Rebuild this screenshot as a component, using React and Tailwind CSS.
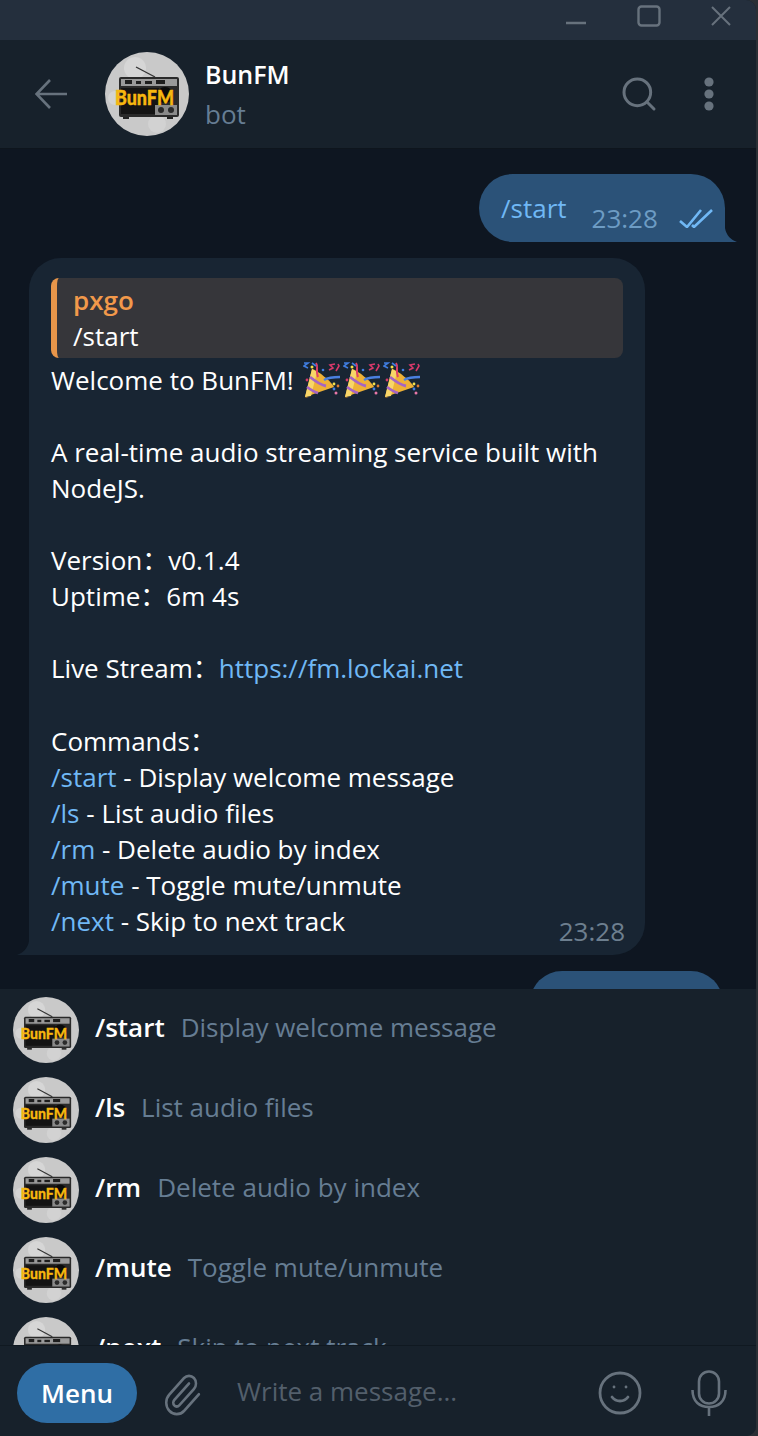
import { Search, Smile } from 'lucide-react';

const font = { fontFamily: '"Open Sans", "Noto Sans CJK SC", sans-serif' };

// round bot logo: grey disc with a little black radio and yellow label
const BotAvatar = ({ size }) => (
  <svg width={size} height={size} viewBox="0 0 84 84" className="shrink-0 block">
    <circle cx="42" cy="42" r="42" fill="#c9c9c9" />
    <circle cx="30" cy="16" r="11" fill="#d6d6d6" />
    <circle cx="52" cy="72" r="9" fill="#d2d2d2" />
    <circle cx="10" cy="46" r="7" fill="#d4d4d4" />
    <path d="M31 15 L50 25" stroke="#333" strokeWidth="1.4" />
    <rect x="14" y="25" width="60" height="40" rx="2" fill="#2a2a2a" />
    <rect x="16" y="27" width="56" height="7" fill="#9a9a9a" />
    <rect x="20" y="28" width="7" height="4" fill="#1e1e1e" />
    <rect x="31" y="29" width="5" height="3" fill="#1e1e1e" />
    <rect x="40" y="29" width="7" height="3" fill="#1e1e1e" />
    <rect x="51" y="28" width="9" height="4" fill="#1e1e1e" />
    <rect x="16" y="36" width="38" height="26" fill="#141414" />
    <circle cx="60" cy="43" r="8" fill="#0a0a0a" />
    <rect x="50" y="53" width="22" height="10" fill="#8a8a8a" />
    <circle cx="56" cy="58" r="3" fill="#2a2a2a" />
    <circle cx="66" cy="58" r="3" fill="#2a2a2a" />
    <rect x="18" y="65" width="6" height="2" fill="#222" />
    <rect x="62" y="65" width="6" height="2" fill="#222" />
    <text x="10" y="53" textLength="59" lengthAdjust="spacingAndGlyphs" fontFamily="Lato, sans-serif" fontWeight="900" fontSize="20" fill="#f6b70f" stroke="#f6b70f" strokeWidth="0.4">BunFM</text>
  </svg>
);

const PartyPopper = () => (
  <svg width="40" height="36" viewBox="0 0 40 36" className="shrink-0">
    <path d="M2 35 L9 7 C14 8 28 19 31 25 Z" fill="#eeb136" />
    <path d="M2 35 L9 7 L14 10 L8 34 Z" fill="#f8d668" />
    <path d="M7 15 C12 19 17 23 23 24 M4 25 C8 28 11 30 15 31" fill="none" stroke="#a464c4" strokeWidth="2.8" />
    <path d="M2 35 L3 36 L6 35 Z" fill="#8a5a20" />
    <path d="M13 1 C16 5 12 8 15 15" fill="none" stroke="#e0406a" strokeWidth="2" />
    <path d="M1 1 L5 1 L1 4 L5 6 M9 1 L13 4" fill="none" stroke="#3f7de0" strokeWidth="1.6" />
    <path d="M26 8 L30 6 L27 3 L32 2 M33 9 L36 4 L35 2" fill="none" stroke="#d83a6a" strokeWidth="1.6" />
    <path d="M21 18 C26 15 31 15 37 15" fill="none" stroke="#4a80e0" strokeWidth="2.4" />
    <circle cx="9" cy="5" r="1.5" fill="#f4e24a" />
    <circle cx="4" cy="18" r="1.4" fill="#d83a6a" />
    <circle cx="31" cy="22" r="1.4" fill="#f4e24a" />
    <circle cx="35" cy="24" r="1.4" fill="#e08030" />
    <circle cx="31" cy="27" r="1.4" fill="#3f7de0" />
    <circle cx="33" cy="31" r="1.5" fill="#e878a8" />
    <circle cx="20" cy="8" r="1.3" fill="#3f7de0" />
  </svg>
);

const Cmd = ({ name, desc }) => (
  <div>
    <span className="text-[#70b8f5]">{name}</span> - {desc}
  </div>
);

const commands = [
  ['/start', 'Display welcome message'],
  ['/ls', 'List audio files'],
  ['/rm', 'Delete audio by index'],
  ['/mute', 'Toggle mute/unmute'],
  ['/next', 'Skip to next track'],
];

const App = () => {
  return (
    <div className="w-[758px] h-[1436px] bg-[#2a2f35]">
      <div style={font} className="w-[756px] h-full flex flex-col overflow-hidden rounded-r-[10px] bg-[#17212b] text-white">
        {/* title bar */}
        <div className="h-10 shrink-0 bg-[#242f3d] flex items-start text-[#67727d]">
          <svg width="756" height="40" viewBox="0 0 756 40" fill="none" stroke="currentColor" strokeWidth="2.4" className="shrink-0">
            <path d="M566 23 H586" />
            <rect x="638.5" y="6.5" width="21" height="19" rx="3" />
            <path d="M712 7 L730 25 M730 7 L712 25" strokeWidth="2" />
          </svg>
        </div>

        {/* chat header */}
        <div className="h-[109px] shrink-0 bg-[#17212b] border-b border-[#0e151d] flex items-center pl-[35px] pr-[42px]">
          <svg width="32" height="30" viewBox="0 0 32 30" fill="none" stroke="#67727d" strokeWidth="2.6" className="shrink-0">
            <path d="M32 15 H2 M15 1 L1.5 15 L15 29" />
          </svg>
          <div className="ml-[38px]">
            <BotAvatar size={84} />
          </div>
          <div className="ml-4 flex-1">
            <div className="text-[25px] leading-[36px] font-semibold text-white">BunFM</div>
            <div className="text-[26px] leading-[36px] mt-[4px] text-[#667d93]">bot</div>
          </div>
          <Search size={40} strokeWidth={1.8} className="text-[#67727d] mr-[45px]" />
          <svg width="10" height="34" viewBox="0 0 10 34" className="text-[#67727d]" fill="currentColor">
            <circle cx="5" cy="5" r="4.6" />
            <circle cx="5" cy="17" r="4.6" />
            <circle cx="5" cy="29" r="4.6" />
          </svg>
        </div>

        {/* messages */}
        <div className="h-[840px] shrink-0 bg-[#0e1621] overflow-hidden flex flex-col pt-[25px] text-[26px] leading-[36px]">
          <div className="self-end shrink-0 mr-[31px] relative w-[246px] h-[68px] rounded-[34px] rounded-br-none bg-[#2b5278] flex pl-[22px] pt-[16px]">
            <span className="text-[#70b8f5]">/start</span>
            <span className="ml-[25px] mt-[10px] text-[#6d9cc4]">23:28</span>
            <svg width="34" height="19" viewBox="0 0 34 19" className="ml-[21px] mt-[19px] text-[#70b8f5]" fill="none" stroke="currentColor" strokeWidth="2.6">
              <path d="M1 12 L8 18 L22 1 M13 16 L15 18 L33 1" />
            </svg>
            <svg width="12" height="14" viewBox="0 0 12 14" className="absolute -right-[12px] bottom-0" fill="#2b5278">
              <path d="M0 0 C1 7 6 12 12 14 L0 14 Z" />
            </svg>
          </div>

          <div className="ml-[29px] mt-4 shrink-0 relative w-[616px] h-[697px] rounded-[32px] rounded-bl-none bg-[#182533] pl-[22px] pr-[22px] pt-[20px]">
            <div className="h-[80px] rounded-[8px] bg-[#36363a] border-l-[6px] border-[#e8964a] pl-[16px] pt-1">
              <div className="font-semibold text-[#f2994a]">pxgo</div>
              <div>/start</div>
            </div>
            <div className="flex items-center h-9 mt-1">
              <span>Welcome to BunFM!</span>
              <span className="flex ml-[9px]">
                <PartyPopper />
                <PartyPopper />
                <PartyPopper />
              </span>
            </div>
            <div className="mt-9">A real-time audio streaming service built with</div>
            <div>NodeJS.</div>
            <div className="mt-9">Version：v0.1.4</div>
            <div>Uptime：6m 4s</div>
            <div className="mt-9">
              Live Stream：<span className="text-[#70b8f5]">https://fm.lockai.net</span>
            </div>
            <div className="mt-[37px]">Commands：</div>
            {commands.map(([name, desc]) => (
              <Cmd key={name} name={name} desc={desc} />
            ))}
            <span className="absolute right-[20px] bottom-[6px] text-[#6d7f8f]">23:28</span>
            <svg width="12" height="14" viewBox="0 0 12 14" className="absolute -left-[12px] bottom-0" fill="#182533">
              <path d="M12 0 C11 7 6 12 0 14 L12 14 Z" />
            </svg>
          </div>

          <div className="self-end shrink-0 mr-[33px] mt-4 w-[193px] h-[40px] rounded-t-[32px] bg-[#2b5278]" />
        </div>

        {/* bot command suggestions */}
        <div className="h-[357px] shrink-0 overflow-hidden bg-[#17212b] border-b border-[#101921] pt-[8px] pl-[13px]">
          {commands.map(([name, desc]) => (
            <div key={name} className="h-20 flex items-start">
              <BotAvatar size={66} />
              <div className="ml-[16px] mt-[12px] text-[26px] leading-[36px] flex">
                <span className="font-semibold text-white">{name}</span>
                <span className="ml-4 text-[#667d93]">{desc}</span>
              </div>
            </div>
          ))}
        </div>

        {/* input bar */}
        <div className="flex-1 bg-[#17212b] flex items-center pl-[17px] pt-1">
          <div className="w-[120px] h-[60px] shrink-0 rounded-[30px] bg-[#2f6ea5] flex items-center justify-center text-[26px] font-semibold text-white">
            Menu
          </div>
          <svg width="42" height="46" viewBox="0 0 24 24" preserveAspectRatio="none" fill="none" stroke="#67727d" strokeWidth="1.45" strokeLinecap="round" className="ml-6 mt-[3px] shrink-0">
            <path d="m16 6-8.414 8.586a2 2 0 0 0 2.829 2.829l8.414-8.586a4 4 0 1 0-5.657-5.657l-8.379 8.551a6 6 0 1 0 8.485 8.485l8.379-8.551" />
          </svg>
          <div className="ml-[34px] flex-1 text-[26px] text-[#535f6b] -mt-1">Write a message...</div>
          <Smile size={48} strokeWidth={1.4} className="shrink-0 text-[#67727d]" />
          <svg width="36" height="46" viewBox="0 0 36 46" fill="none" stroke="#67727d" strokeWidth="2.6" className="ml-[47px] mr-[29px] shrink-0">
            <rect x="8" y="1.5" width="20" height="32" rx="10" />
            <path d="M1.5 20 C1.5 32 9 37 18 37 C27 37 34.5 32 34.5 20 M18 37 V46" />
          </svg>
        </div>
      </div>
    </div>
  );
};

export default App;
